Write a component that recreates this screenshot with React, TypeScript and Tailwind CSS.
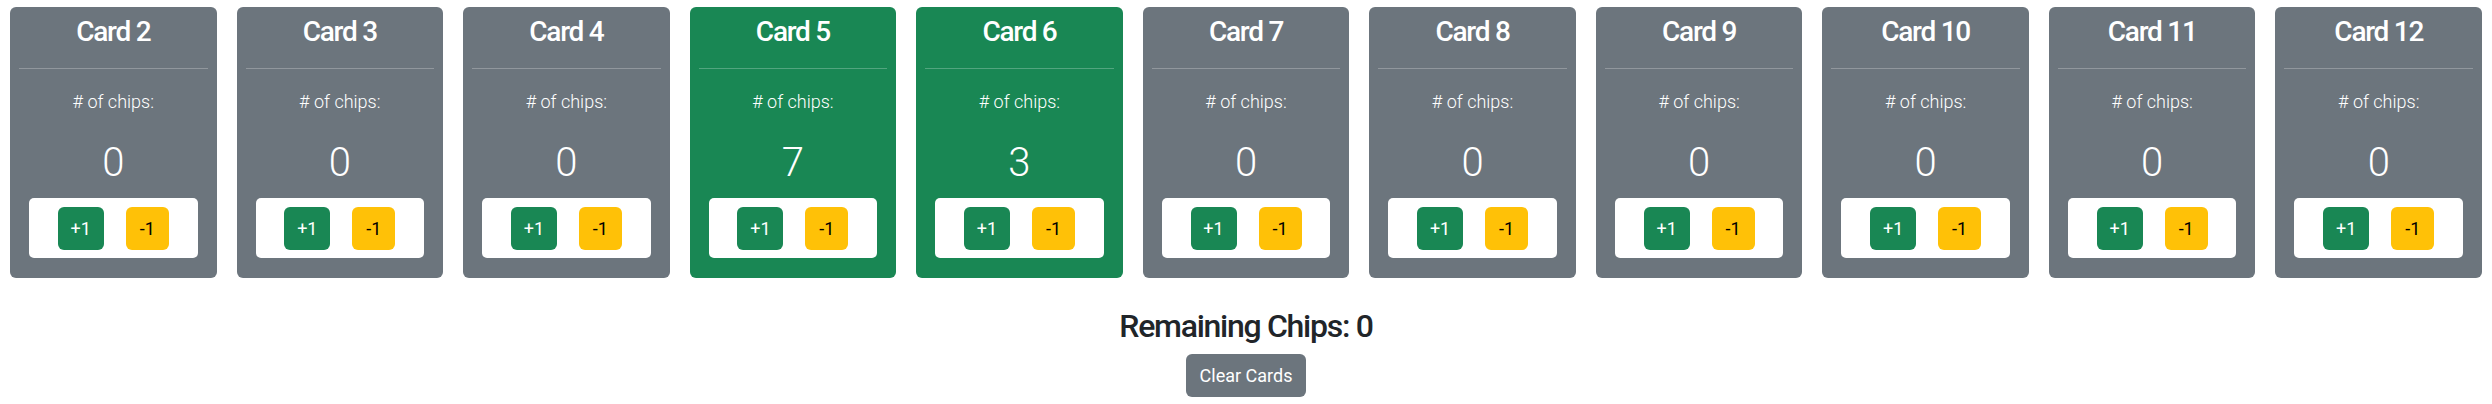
import React, { useState } from 'react';

const INITIAL = [0, 0, 0, 7, 3, 0, 0, 0, 0, 0, 0];

const ChipCard = ({ label, chips, onAdd, onRemove }: { label: string; chips: number; onAdd: () => void; onRemove: () => void }) => {
  const active = chips > 0;
  return (
    <div className={`flex-1 rounded-[6px] px-[9px] pt-[8px] pb-[20px] text-white text-center ${active ? 'bg-[#198754]' : 'bg-[#6c757d]'}`}>
      <h3 className="text-[28px] leading-[34px] font-medium tracking-[-0.045em]">{label}</h3>
      <hr className="mt-[19px] border-t border-white/25" />
      <p className="mt-[19px] text-[18px] leading-[27px] font-light">
        # of chips:
      </p>
      <div className="mt-[24px] text-[40px] leading-[48px] font-light">{chips}</div>
      <div className="mx-[10px] mt-[11px] flex h-[60px] items-center justify-center gap-[22px] rounded-[5px] bg-white">
        <button onClick={onAdd} className="h-[43px] w-[46px] rounded-[6px] bg-[#198754] text-[18px] text-white">
          +1
        </button>
        <button onClick={onRemove} className="h-[43px] w-[43px] rounded-[6px] bg-[#ffc107] text-[18px] text-black">
          -1
        </button>
      </div>
    </div>
  );
};

export default function App() {
  const [cards, setCards] = useState<number[]>(INITIAL);
  const total = 10;
  const used = cards.reduce((a, b) => a + b, 0);

  const change = (i: number, d: number) => {
    setCards((prev) => prev.map((c, j) => (j === i ? Math.max(0, c + d) : c)));
  };

  return (
    <div className="min-h-screen bg-white font-['Roboto',sans-serif] text-[#212529]">
      <div className="flex gap-[20px] px-[10px] pt-[7px]">
        {cards.map((c, i) => (
          <ChipCard
            key={i}
            label={`Card ${i + 2}`}
            chips={c}
            onAdd={() => change(i, 1)}
            onRemove={() => change(i, -1)}
          />
        ))}
      </div>
      <div className="flex flex-col items-center">
        <h2 className="mt-[29px] text-[32px] leading-[38px] font-medium tracking-[-0.04em]">
          Remaining Chips: {total - used}
        </h2>
        <button
          onClick={() => setCards(cards.map(() => 0))}
          className="mt-[9px] h-[43px] w-[120px] rounded-[6px] bg-[#6c757d] text-[18px] text-white"
        >
          Clear Cards
        </button>
      </div>
    </div>
  );
}
